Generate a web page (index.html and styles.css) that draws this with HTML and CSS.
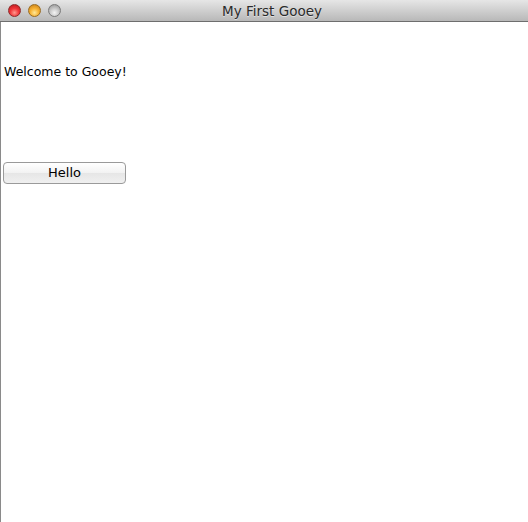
FILE: index.html
```html
<!DOCTYPE html>
<html>
<head>
<meta charset="utf-8">
<link rel="stylesheet" href="styles.css">
</head>
<body>
<div class="window">
  <div class="titlebar">
    <div class="lights">
      <span class="light red"></span>
      <span class="light yellow"></span>
      <span class="light gray"></span>
    </div>
    <div class="title">My First Gooey</div>
  </div>
  <div class="content">
    <div class="label">Welcome to Gooey!</div>
    <button class="btn">Hello</button>
  </div>
</div>
</body>
</html>
```
FILE: styles.css
```css
html, body {
  margin: 0;
  padding: 0;
  background: #ffffff;
}
.window {
  width: 528px;
  height: 522px;
  display: flex;
  flex-direction: column;
  font-family: "DejaVu Sans", "Liberation Sans", sans-serif;
}
.titlebar {
  height: 21px;
  flex: none;
  position: relative;
  background: linear-gradient(#e6e6e6, #cfcfcf 50%, #b8b8b8);
  border-bottom: 1px solid #6e6e6e;
  display: flex;
  align-items: center;
  justify-content: center;
}
.lights {
  position: absolute;
  left: 8px;
  top: 4px;
  display: flex;
  gap: 7px;
}
.light {
  width: 13px;
  height: 13px;
  border-radius: 50%;
  box-sizing: border-box;
}
.red {
  background: radial-gradient(circle at 50% 70%, #ff9a8f 0%, #f0363a 45%, #b3151a 100%);
  border: 1px solid #8e2a2a;
}
.yellow {
  background: radial-gradient(circle at 50% 70%, #ffe89a 0%, #f7b232 45%, #c07817 100%);
  border: 1px solid #9a6c20;
}
.gray {
  background: radial-gradient(circle at 50% 70%, #f4f4f4 0%, #c9c9c9 45%, #8e8e8e 100%);
  border: 1px solid #7a7a7a;
}
.title {
  font-size: 13.5px;
  color: #2a2a2a;
  margin-left: 16px;
  margin-top: 1px;
  text-shadow: 0 1px 0 rgba(255,255,255,0.5);
}
.content {
  flex: 1;
  border-left: 1px solid #8a8a8a;
  padding: 42px 0 0 3px;
  display: flex;
  flex-direction: column;
  align-items: flex-start;
}
.label {
  font-size: 12.5px;
  color: #000;
  line-height: 15px;
}
.btn {
  margin-top: 83px;
  margin-left: -1px;
  width: 123px;
  height: 22px;
  border: 1px solid #9a9a9a;
  border-radius: 4px;
  background: linear-gradient(#ffffff, #f2f2f2 50%, #e6e6e6 51%, #f0f0f0);
  font-family: "DejaVu Sans", "Liberation Sans", sans-serif;
  font-size: 13px;
  color: #000;
  padding: 0;
  line-height: 20px;
}
```
